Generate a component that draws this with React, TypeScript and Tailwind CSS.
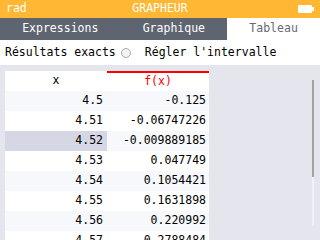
import React from 'react';

const rows: [string, string][] = [
    ['4.5', '-0.125'],
    ['4.51', '-0.06747226'],
    ['4.52', '-0.009889185'],
    ['4.53', '0.047749'],
    ['4.54', '0.1054421'],
    ['4.55', '0.1631898'],
    ['4.56', '0.220992'],
    ['4.57', '0.2788484'],
];

const Battery = () => (
    <svg width="16" height="8" viewBox="0 0 16 8">
        <rect x="0" y="0" width="14" height="8" rx="1" fill="#ffffff" />
        <rect x="14" y="2" width="2" height="4" fill="#ffffff" />
    </svg>
);

export default function App() {
    return (
        <div className="w-[320px] h-[240px] overflow-hidden flex flex-col bg-[#e5e5ee] font-['DejaVu_Sans_Mono',monospace] text-[11.5px] leading-none">
            {/* title bar */}
            <div className="h-[18px] shrink-0 bg-[#ffb734] text-white flex items-center justify-between px-[6px]">
                <span className="w-[40px]">rad</span>
                <span>GRAPHEUR</span>
                <div className="w-[40px] flex justify-end">
                    <Battery />
                </div>
            </div>

            {/* tabs */}
            <div className="h-[22px] shrink-0 flex bg-[#5e6570]">
                <div className="flex-auto flex items-center justify-center text-white">Expressions</div>
                <div className="flex-auto flex items-center justify-center text-white">Graphique</div>
                <div className="flex-auto flex items-center justify-center bg-white text-[#656975]">Tableau</div>
            </div>

            {/* options */}
            <div className="h-[25px] shrink-0 bg-white flex items-center px-[5px] text-black">
                <span>Résultats exacts</span>
                <span className="ml-[5px] w-[10px] h-[10px] rounded-full border border-[#a8a8ae] bg-[#f4f4f6]" />
                <span className="ml-[14px]">Régler l'intervalle</span>
            </div>

            {/* table area */}
            <div className="flex-1 flex pt-[6px] pl-[5px]">
                <div className="w-[204px] flex flex-col">
                    <div className="h-[20px] shrink-0 flex">
                        <div className="w-[102px] bg-white flex items-center justify-center text-black">x</div>
                        <div className="w-[102px] bg-white border-t-2 border-[#ff0000] flex items-center justify-center text-[#ff0000]">f(x)</div>
                    </div>
                    {rows.map(([x, y], i) => {
                        const odd = i % 2 === 0;
                        const selected = i === 2;
                        return (
                            <div key={x} className="h-[20px] shrink-0 flex text-black">
                                <div
                                    className={
                                        selected
                                            ? 'w-[102px] bg-[#d5d7e5] flex items-center justify-end pr-[4px]'
                                            : odd
                                              ? 'w-[102px] bg-[#f7f8fc] flex items-center justify-end pr-[4px]'
                                              : 'w-[102px] bg-white flex items-center justify-end pr-[4px]'
                                    }
                                >
                                    {x}
                                </div>
                                <div
                                    className={
                                        odd
                                            ? 'w-[102px] bg-[#f7f8fc] flex items-center justify-end pr-[3px]'
                                            : 'w-[102px] bg-white flex items-center justify-end pr-[3px]'
                                    }
                                >
                                    {y}
                                </div>
                            </div>
                        );
                    })}
                </div>
                <div className="flex-1" />
                {/* scroll indicator */}
                <div className="mr-[6px] mt-[9px] w-[2px] h-[146px] flex flex-col">
                    <div className="h-[97px] bg-[#a3a3a6]" />
                    <div className="flex-1 bg-[#f1f1f5]" />
                </div>
            </div>
        </div>
    );
}
